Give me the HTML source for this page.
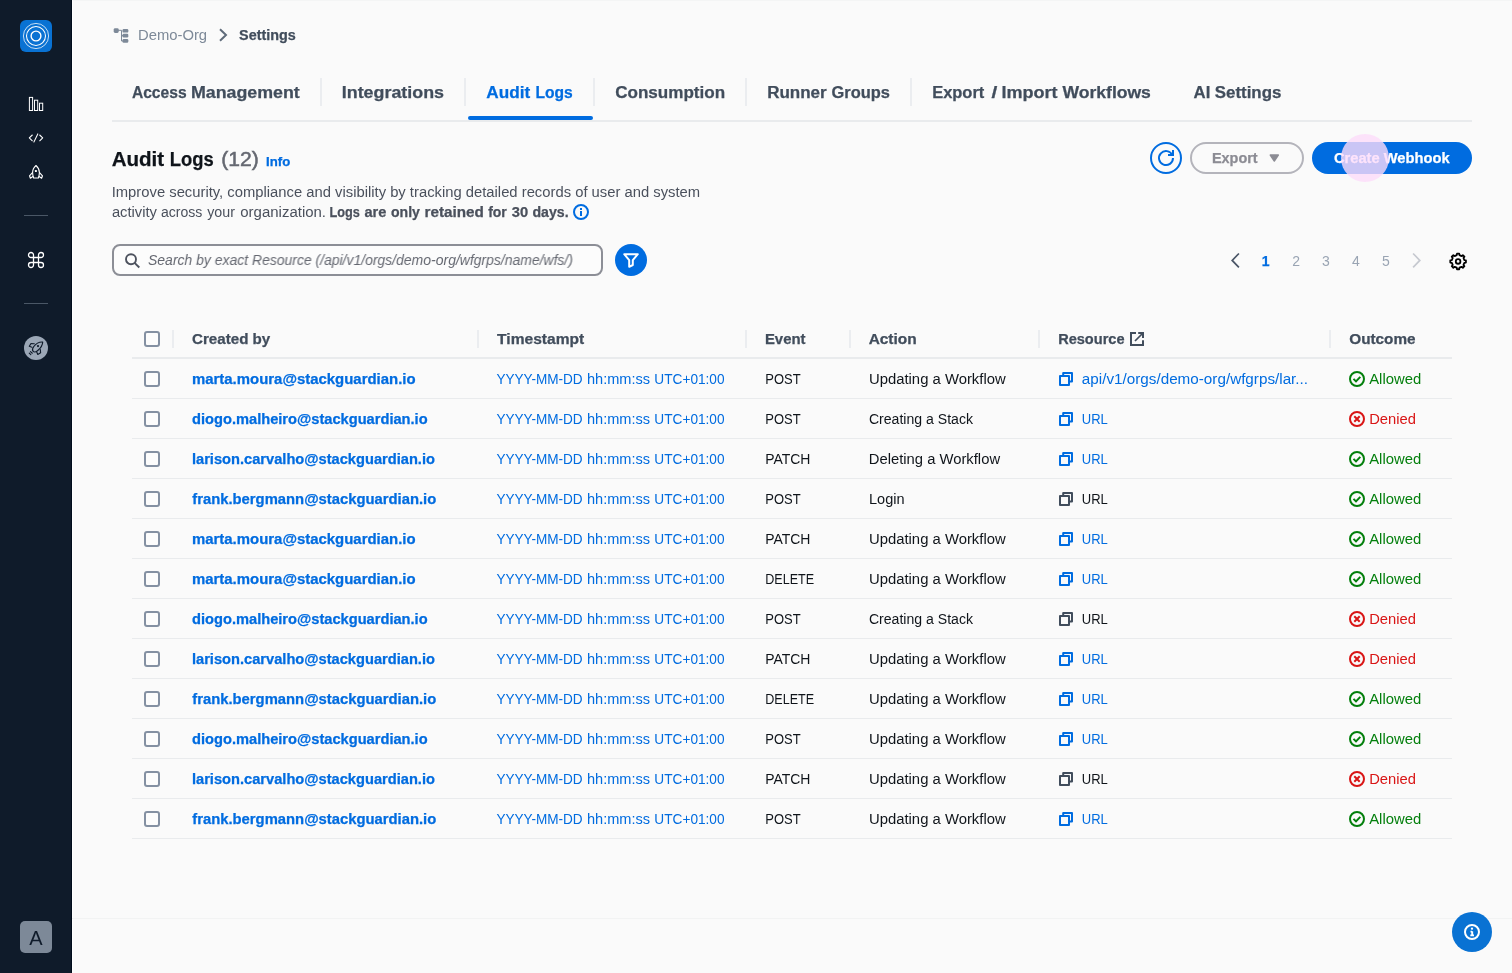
<!DOCTYPE html>
<html lang="en">
<head>
<meta charset="utf-8">
<title>Settings - Audit Logs</title>
<style>
*{box-sizing:border-box;margin:0;padding:0}
html,body{width:1512px;height:973px;overflow:hidden;background:#fafafa}
body{font-family:"Liberation Sans",sans-serif;font-size:14px;line-height:20px;color:#0f141a;position:relative}
.t{position:absolute;white-space:nowrap;display:block;transform-origin:0 50%}
.w{display:inline-block;white-space:pre;transform-origin:0 50%}
.a{position:absolute}
#app{position:absolute;left:0;top:0;width:1512px;height:973px;will-change:transform}
svg{display:block;position:absolute;overflow:visible}
#side{position:absolute;left:0;top:0;width:72px;height:973px;background:#0f1b2a;border-right:1px solid #010c1b}
#wl{position:absolute;left:72px;top:0;width:1px;height:973px;background:#fff}
#tl{position:absolute;left:73px;top:0;width:1439px;height:1px;background:#f4f5f5}
#logo{position:absolute;left:20px;top:20px;width:32px;height:32px;border-radius:6px;background:#0972d3}
.sdiv{position:absolute;left:24px;width:24px;height:1px;background:#4a5766}
#rk{position:absolute;left:24px;top:336px;width:24px;height:24px;border-radius:50%;background:#9ba7b6}
#ava{position:absolute;left:20px;top:921px;width:32px;height:32px;border-radius:5px;background:#7d8998}
#tabs{position:absolute;left:112px;top:64px;width:1360px;height:58px;border-bottom:2px solid #e9ebed}
.tsep{position:absolute;top:14px;width:2px;height:28px;background:#ebedf0}
#tline{position:absolute;left:356px;top:52px;width:125px;height:4px;border-radius:2px;background:#006ce0}
#tbl{position:absolute;left:132px;top:319px;width:1320px;height:520px}
.row{position:absolute;left:0;width:1320px;height:40px;border-bottom:1px solid #e9ebed}
.row.hd{border-bottom:2px solid #e9ebed}
.cb{position:absolute;left:12px;top:12px;width:16px;height:16px;border:2px solid #8490a2;border-radius:3px;background:#fcfcfc}
.hsep{position:absolute;top:11px;width:2px;height:18px;background:#ebedf0}
.ext{left:998px;top:13.2px}
.ic5{left:927px;top:13px}
.ic6{left:1217px;top:12px}
.lb{color:#006ce0}.lk{color:#0f141a}
.e1{left:59px;top:10px;transform:translateX(0.93px) scaleX(1.0665);font-weight:700;-webkit-text-stroke:0.25px;color:#006ce0}
.e2{left:60px;top:10px;transform:translateX(0.08px) scaleX(1.0457);font-weight:700;-webkit-text-stroke:0.25px;color:#006ce0}
.e3{left:59px;top:10px;transform:translateX(0.95px) scaleX(1.0461);font-weight:700;-webkit-text-stroke:0.25px;color:#006ce0}
.e4{left:60px;top:10px;transform:translateX(0.22px) scaleX(1.0578);font-weight:700;-webkit-text-stroke:0.25px;color:#006ce0}
.ts{left:363px;top:10px;color:#006ce0}
.ts1{width:93px;transform:translateX(1.41px) scaleX(0.9700)}
.ts2{width:65px;transform:translateX(-1.04px) scaleX(1.0411)}
.ts3{width:72px;transform:translateX(1.32px) scaleX(0.9759)}
.v1{left:633px;top:10px;transform:translateX(0.22px) scaleX(0.9273);color:#0f141a}
.v2{left:633px;top:10px;transform:translateX(0.14px) scaleX(0.9977);color:#0f141a}
.v3{left:633px;top:10px;transform:translateX(0.25px) scaleX(0.8981);color:#0f141a}
.a1{left:736px;top:10px;transform:translateX(0.94px) scaleX(1.0608);color:#0f141a}
.a2{left:736px;top:10px;transform:translateX(0.93px) scaleX(1.0055);color:#0f141a}
.a3{left:736px;top:10px;transform:translateX(0.77px) scaleX(1.0569);color:#0f141a}
.a4{left:736px;top:10px;transform:translateX(0.99px) scaleX(1.0383);color:#0f141a}
.r1{left:949px;top:10px;transform:translateX(0.87px) scaleX(1.0887)}
.r2{left:949px;top:10px;transform:translateX(0.77px) scaleX(0.9283)}
.o1{left:1237px;top:10px;transform:translateX(0.20px) scaleX(1.0609);color:#037f0c}
.o2{left:1237px;top:10px;transform:translateX(0.17px) scaleX(1.0535);color:#d91515}
</style>
</head>
<body>
<div id="app">
<div id="wl"></div><div id="tl"></div>
<div id="side">
  <div id="logo"><svg width="32" height="32" viewBox="0 0 32 32" fill="none" stroke="#fff"><circle cx="16" cy="16" r="12.6" stroke-width=".75"/><circle cx="16" cy="16" r="9.5" stroke-width="1.050"/><circle cx="16" cy="16" r="4.900" stroke-width="1.400"/></svg></div>
  <svg style="left:28px;top:96px" width="16" height="16" viewBox="0 0 16 16" fill="none" stroke="#fff" stroke-width="1"><rect x="1.4" y="1.4" width="3.2" height="13.1"/><rect x="6.500" y="4.2" width="3.200" height="10.3"/><rect x="11.500" y="7.2" width="3.200" height="7.3"/></svg>
  <svg style="left:28px;top:130px" width="16" height="16" viewBox="0 0 16 16" fill="none" stroke="#fff" stroke-width="1.050" stroke-linecap="round" stroke-linejoin="round"><path d="M4.300 5L1.300 7.900l3 2.900M11.700 5l3 2.900-3 2.900M9.800 3.900L5.900 12"/></svg>
  <svg style="left:28px;top:164px" width="16" height="16" viewBox="0 0 16 16" fill="none" stroke="#fff" stroke-width="1.1" stroke-linejoin="round"><path d="M8 1.5C5.6 3.6 4.6 6.2 4.6 8.6c0 2 .5 4 1 5.4h4.8c.5-1.4 1-3.400 1-5.400C11.400 6.200 10.400 3.600 8 1.500z"/><path d="M4.700 8.300L1.500 11.800 2.400 14.300 5.200 12.300M11.300 8.300l3.200 3.500-.9 2.500-2.800-2"/><rect x="6.900" y="6" width="2" height="2" rx=".5" fill="#fff" stroke="none"/></svg>
  <div class="sdiv" style="top:215px"></div>
  <svg style="left:27px;top:251px" width="18" height="18" viewBox="0 0 18 18" fill="none" stroke="#fff" stroke-width="1.3"><path d="M6.500 6.500h5v5h-5z"/><path d="M6.500 6.500H4A2.500 2.500 0 1 1 6.500 4zM11.500 6.500V4A2.500 2.500 0 1 1 14 6.500zM11.500 11.500H14A2.500 2.500 0 1 1 11.500 14zM6.500 11.500V14A2.500 2.500 0 1 1 4 11.500z"/></svg>
  <div class="sdiv" style="top:303px"></div>
  <div id="rk"><svg style="left:0;top:0" width="24" height="24" viewBox="0 0 24 24" fill="none" stroke="#0f1b2a" stroke-width="1.150" stroke-linejoin="round" stroke-linecap="round"><path d="M18.700 6C15.500 5.800 12 7.500 9.800 10.500 8.300 12.600 8 14 9 15.200c1 1.200 2.600 1 4.500-.5 3-2.300 5.100-5.200 5.200-8.700z"/><path d="M10.300 7.700L7 7.500 5.300 10.300l2.600.9M16.300 13.600l.3 3.100-2.800 1.700-1.100-2.400"/><circle cx="14" cy="10.100" r="1.100" fill="#0f1b2a" stroke="none"/><path d="M6.500 15.600l1.800 1.600M5.300 17.200l1.500 1.400"/></svg></div>
  <div id="ava"></div>
  <span class="t" style="left:29px;top:926px;transform:translateX(.33px);font-size:20px;line-height:24px;color:#0f1b2a">A</span>
</div>

<!-- breadcrumb icons -->
<svg style="left:113px;top:28px" width="16" height="16" viewBox="0 0 16 16" fill="#7d8998" stroke="none"><rect x=".7" y=".2" width="5" height="4.800" rx="1.400"/><rect x="9.500" y="1" width="5.800" height="3.600" rx="1.200"/><rect x="9.500" y="5.700" width="5.800" height="3.800" rx="1.200"/><rect x="9.500" y="11" width="5.800" height="3.800" rx="1.200"/><path d="M5 2.300h3.500v10.700h2" fill="none" stroke="#7d8998" stroke-width="1"/><path d="M8.500 7.600h2" fill="none" stroke="#7d8998" stroke-width="1"/></svg>
<svg style="left:215px;top:27px" width="16" height="16" viewBox="0 0 16 16" fill="none" stroke="#5f6b7a" stroke-width="2"><path d="M5 2.200L11 8l-6 5.800"/></svg>

<div id="tabs">
  <div class="tsep" style="left:208px"></div>
  <div class="tsep" style="left:352px"></div>
  <div class="tsep" style="left:480.700px"></div>
  <div class="tsep" style="left:633px"></div>
  <div class="tsep" style="left:798px"></div>
  <div id="tline"></div>
</div>

<!-- search -->
<div class="a" style="left:112px;top:244px;width:491px;height:32px;border:2px solid #8c8e96;border-radius:8px;background:#fcfcfc"></div>
<svg style="left:124px;top:252px" width="16" height="16" viewBox="0 0 16 16" fill="none" stroke="#4d525e" stroke-width="1.900"><circle cx="7" cy="7.200" r="5"/><path d="M15.300 15.500L10.600 10.800"/></svg>
<div class="a" style="left:615px;top:244px;width:32px;height:32px;border-radius:50%;background:#006ce0"></div>
<svg style="left:623px;top:252px" width="16" height="16" viewBox="0 0 16 16" fill="none" stroke="#fff" stroke-width="2" stroke-linejoin="round"><path d="M14.800 2.200H1.200l5 6v6.600l3.600-1.800V8.200l5-6Z"/></svg>
<!-- info icon -->
<svg style="left:573px;top:204px" width="16" height="16" viewBox="0 0 16 16" fill="none" stroke="#006ce0" stroke-width="2"><circle cx="8" cy="8" r="7"/><path d="M8 7v5"/><path d="M8 4v2"/></svg>

<!-- actions -->
<div class="a" style="left:1150px;top:142px;width:32px;height:32px;border-radius:50%;border:2px solid #006ce0"></div>
<svg style="left:1158px;top:150px" width="16" height="16" viewBox="0 0 16 16" fill="none" stroke="#006ce0" stroke-width="2"><path d="M10 5h5V0"/><path d="M15 8a7 7 0 1 1-.700-3"/></svg>
<div class="a" style="left:1190px;top:142px;width:114px;height:32px;border-radius:16px;border:2px solid #b4b4bb"></div>
<svg style="left:1268px;top:152px" width="12" height="12" viewBox="0 0 12 12" fill="#8c8c94" stroke="#8c8c94" stroke-width="1.500" stroke-linejoin="round"><path d="M2.300 3l8 0-4 6z"/></svg>
<div class="a" style="left:1312px;top:142px;width:160px;height:32px;border-radius:16px;background:#006ce0"></div>

<!-- pagination -->
<svg style="left:1227px;top:252px" width="16" height="16" viewBox="0 0 16 16" fill="none" stroke="#4a5567" stroke-width="1.700"><path d="M11.900 1.500L5.200 8.400l6.700 6.900"/></svg>
<svg style="left:1408px;top:252px" width="16" height="16" viewBox="0 0 16 16" fill="none" stroke="#c6c9d0" stroke-width="1.700"><path d="M5.100 1.500l6.700 6.900-6.700 6.900"/></svg>
<!--G1--><svg style="left:1450px;top:253px" width="16" height="16" viewBox="0 0 16 16" fill="none" stroke="#000" stroke-width="1.8" stroke-linejoin="round"><path d="M7.00 0.63L9.20 0.63L9.49 2.20L11.54 3.05L12.85 2.14L14.41 3.70L13.50 5.01L14.35 7.06L15.92 7.35L15.92 9.55L14.35 9.84L13.50 11.89L14.41 13.20L12.85 14.76L11.54 13.85L9.49 14.70L9.20 16.27L7.00 16.27L6.71 14.70L4.66 13.85L3.35 14.76L1.79 13.20L2.70 11.89L1.85 9.84L0.28 9.55L0.28 7.35L1.85 7.06L2.70 5.01L1.79 3.70L3.35 2.14L4.66 3.05L6.71 2.20Z"/><circle cx="8.1" cy="8.45" r="2.3"/></svg><!--G2-->

<span class="t" style="left:137px;top:25px;transform:translateX(0.97px) scaleX(1.0575);color:#7d8998">Demo-Org</span>
<span class="t" style="left:239px;top:25px;transform:translateX(0.09px) scaleX(1.0265);font-weight:700;-webkit-text-stroke:0.25px;color:#414d5c">Settings</span>
<span class="t" style="left:131px;top:83px;font-size:16px;font-weight:700;-webkit-text-stroke:0.25px;color:#414d5c"><span class="w" style="width:61px;transform:translateX(0.91px) scaleX(0.9757)">Access </span><span class="w" style="width:98px;transform:translateX(-1.11px) scaleX(1.1131)">Management</span></span>
<span class="t" style="left:341px;top:83px;transform:translateX(0.78px) scaleX(1.1165);font-size:16px;font-weight:700;-webkit-text-stroke:0.25px;color:#414d5c">Integrations</span>
<span class="t" style="left:485px;top:83px;font-size:16px;font-weight:700;-webkit-text-stroke:0.25px;color:#006ce0"><span class="w" style="width:46px;transform:translateX(1.26px) scaleX(1.0730)">Audit </span><span class="w" style="width:39px;transform:translateX(4.52px) scaleX(0.9753)">Logs</span></span>
<span class="t" style="left:615px;top:83px;transform:translateX(0.19px) scaleX(1.0660);font-size:16px;font-weight:700;-webkit-text-stroke:0.25px;color:#414d5c">Consumption</span>
<span class="t" style="left:767px;top:83px;font-size:16px;font-weight:700;-webkit-text-stroke:0.25px;color:#414d5c"><span class="w" style="width:61px;transform:translateX(0.14px) scaleX(1.0632)">Runner </span><span class="w" style="width:57px;transform:translateX(3.52px) scaleX(1.0252)">Groups</span></span>
<span class="t" style="left:932px;top:83px;font-size:16px;font-weight:700;-webkit-text-stroke:0.25px;color:#414d5c"><span class="w" style="width:56px;transform:translateX(0.17px) scaleX(1.0283)">Export </span><span class="w" style="width:9px;transform:translateX(3.58px) scaleX(1.3000)">/ </span><span class="w" style="width:55px;transform:translateX(4.47px) scaleX(1.1260)">Import </span><span class="w" style="width:81px;transform:translateX(10.50px) scaleX(1.0963)">Workflows</span></span>
<span class="t" style="left:1193px;top:83px;font-size:16px;font-weight:700;-webkit-text-stroke:0.25px;color:#414d5c"><span class="w" style="width:21px;transform:translateX(0.58px) scaleX(1.0465)">AI </span><span class="w" style="width:64px;transform:translateX(0.77px) scaleX(1.0548)">Settings</span></span>
<span class="t" style="left:111px;top:147px;font-size:20px;line-height:24px;font-weight:700;-webkit-text-stroke:0.25px;color:#0f141a"><span class="w" style="width:57px;transform:translateX(0.69px) scaleX(1.0272)">Audit </span><span class="w" style="width:48px;transform:translateX(1.77px) scaleX(0.9197)">Logs</span></span>
<span class="t" style="left:221px;top:147px;transform:translateX(0.27px) scaleX(1.0553);font-size:20px;line-height:24px;-webkit-text-stroke:0.5px;color:#656871">(12)</span>
<span class="t" style="left:266px;top:154px;transform:translateX(0.08px) scaleX(1.0984);font-size:12px;line-height:16px;font-weight:700;-webkit-text-stroke:0.25px;color:#006ce0">Info</span>
<span class="t" style="left:111px;top:182px;transform:translateX(0.69px) scaleX(1.0567);color:#4a505c">Improve security, compliance and visibility by tracking detailed records of user and system</span>
<span class="t" style="left:111px;top:202px;color:#4a505c"><span class="w" style="width:47px;transform:translateX(0.90px) scaleX(1.0524)">activity </span><span class="w" style="width:46px;transform:translateX(3.03px) scaleX(1.0025)">across </span><span class="w" style="width:32px;transform:translateX(3.23px) scaleX(1.0174)">your </span><span class="w" style="width:85px;transform:translateX(4.29px) scaleX(1.0695)">organization. </span></span>
<span class="t" style="left:329px;top:202px;font-weight:700;-webkit-text-stroke:0.25px;color:#4a505c"><span class="w" style="width:38px;transform:translateX(0.39px) scaleX(0.9079)">Logs </span><span class="w" style="width:25px;transform:translateX(-2.52px) scaleX(1.0400)">are </span><span class="w" style="width:33px;transform:translateX(-1.00px) scaleX(1.0047)">only </span><span class="w" style="width:59px;transform:translateX(-0.49px) scaleX(1.0876)">retained </span><span class="w" style="width:23px;transform:translateX(4.13px) scaleX(0.9982)">for </span><span class="w" style="width:20px;transform:translateX(4.85px) scaleX(1.0500)">30 </span><span class="w" style="width:36px;transform:translateX(5.50px) scaleX(1.0078)">days.</span></span>
<span class="t" style="left:148px;top:250px;transform:translateX(0.00px) scaleX(0.9965);font-style:italic;color:#656871">Search by exact Resource (/api/v1/orgs/demo-org/wfgrps/name/wfs/)</span>
<span class="t" style="left:1211px;top:148px;transform:translateX(0.97px) scaleX(1.0309);font-weight:700;-webkit-text-stroke:0.25px;color:#8c8c94">Export</span>
<span class="t" style="left:1333px;top:148px;transform:translateX(0.98px) scaleX(1.0486);font-weight:700;-webkit-text-stroke:0.25px;color:#fff">Create Webhook</span>
<span class="t" style="left:1261px;top:251px;transform:translateX(0.77px);font-weight:700;-webkit-text-stroke:0.25px;color:#006ce0">1</span>
<span class="t" style="left:1292px;top:251px;transform:translateX(0.27px);color:#99a4b3">2</span>
<span class="t" style="left:1322px;top:251px;transform:translateX(0.02px);color:#99a4b3">3</span>
<span class="t" style="left:1352px;top:251px;transform:translateX(0.12px);color:#99a4b3">4</span>
<span class="t" style="left:1382px;top:251px;transform:translateX(0.08px);color:#99a4b3">5</span>

<div class="a" style="left:1341px;top:134px;width:48px;height:48px;border-radius:50%;background:rgba(253,220,250,.8)"></div>

<div id="tbl">
<div class="row hd" style="top:0"><b class="cb"></b><i class="hsep" style="left:40px"></i><i class="hsep" style="left:345px"></i><i class="hsep" style="left:613px"></i><i class="hsep" style="left:717px"></i><i class="hsep" style="left:906px"></i><i class="hsep" style="left:1197px"></i><span class="t" style="left:60px;top:10px;transform:translateX(0.06px) scaleX(1.0800);font-weight:700;-webkit-text-stroke:0.25px;color:#414d5c">Created by</span><span class="t" style="left:365px;top:10px;transform:translateX(0.11px) scaleX(1.1115);font-weight:700;-webkit-text-stroke:0.25px;color:#414d5c">Timestampt</span><span class="t" style="left:632px;top:10px;transform:translateX(0.94px) scaleX(1.0622);font-weight:700;-webkit-text-stroke:0.25px;color:#414d5c">Event</span><span class="t" style="left:736px;top:10px;transform:translateX(0.63px) scaleX(1.1031);font-weight:700;-webkit-text-stroke:0.25px;color:#414d5c">Action</span><span class="t" style="left:926px;top:10px;transform:translateX(0.16px) scaleX(1.0396);font-weight:700;-webkit-text-stroke:0.25px;color:#414d5c">Resource</span><span class="t" style="left:1217px;top:10px;transform:translateX(0.25px) scaleX(1.0927);font-weight:700;-webkit-text-stroke:0.25px;color:#414d5c">Outcome</span><svg class="ext" width="14" height="14" viewBox="0 0 14 14" fill="none" stroke="#414d5c" stroke-width="2"><path d="M13 8.200V13H1V1h5"/><path d="M8.200 1H13v5"/><path d="M12.500 1.500L5 9" stroke-width="1.700"/></svg></div>
<div class="row" style="top:40px"><b class="cb"></b><span class="t e1">marta.moura@stackguardian.io</span><span class="t ts"><span class="w ts1">YYYY-MM-DD </span><span class="w ts2">hh:mm:ss </span><span class="w ts3">UTC+01:00</span></span><span class="t v1">POST</span><span class="t a1">Updating a Workflow</span><svg class="ic5" width="14" height="14" viewBox="0 0 14 14" fill="none" stroke="#006ce0" stroke-width="2" stroke-linejoin="round"><path d="M1 4h9v9H1z"/><path d="M4.200 3.500V1H13v8.600h-2.500"/></svg><span class="t r1 lb">api/v1/orgs/demo-org/wfgrps/lar...</span><svg class="ic6" width="16" height="16" viewBox="0 0 16 16" fill="none" stroke="#037f0c" stroke-width="2"><circle cx="8" cy="8" r="7"/><path d="M4.500 7.900l2.500 2.500 4.300-4.500"/></svg><span class="t o1">Allowed</span></div>
<div class="row" style="top:80px"><b class="cb"></b><span class="t e2">diogo.malheiro@stackguardian.io</span><span class="t ts"><span class="w ts1">YYYY-MM-DD </span><span class="w ts2">hh:mm:ss </span><span class="w ts3">UTC+01:00</span></span><span class="t v1">POST</span><span class="t a2">Creating a Stack</span><svg class="ic5" width="14" height="14" viewBox="0 0 14 14" fill="none" stroke="#006ce0" stroke-width="2" stroke-linejoin="round"><path d="M1 4h9v9H1z"/><path d="M4.200 3.500V1H13v8.600h-2.500"/></svg><span class="t r2 lb">URL</span><svg class="ic6" width="16" height="16" viewBox="0 0 16 16" fill="none" stroke="#d91515" stroke-width="2"><circle cx="8" cy="8" r="7"/><path d="M5.300 5.300l5.400 5.400M10.700 5.300l-5.400 5.400"/></svg><span class="t o2">Denied</span></div>
<div class="row" style="top:120px"><b class="cb"></b><span class="t e3">larison.carvalho@stackguardian.io</span><span class="t ts"><span class="w ts1">YYYY-MM-DD </span><span class="w ts2">hh:mm:ss </span><span class="w ts3">UTC+01:00</span></span><span class="t v2">PATCH</span><span class="t a3">Deleting a Workflow</span><svg class="ic5" width="14" height="14" viewBox="0 0 14 14" fill="none" stroke="#006ce0" stroke-width="2" stroke-linejoin="round"><path d="M1 4h9v9H1z"/><path d="M4.200 3.500V1H13v8.600h-2.500"/></svg><span class="t r2 lb">URL</span><svg class="ic6" width="16" height="16" viewBox="0 0 16 16" fill="none" stroke="#037f0c" stroke-width="2"><circle cx="8" cy="8" r="7"/><path d="M4.500 7.900l2.500 2.500 4.300-4.500"/></svg><span class="t o1">Allowed</span></div>
<div class="row" style="top:160px"><b class="cb"></b><span class="t e4">frank.bergmann@stackguardian.io</span><span class="t ts"><span class="w ts1">YYYY-MM-DD </span><span class="w ts2">hh:mm:ss </span><span class="w ts3">UTC+01:00</span></span><span class="t v1">POST</span><span class="t a4">Login</span><svg class="ic5" width="14" height="14" viewBox="0 0 14 14" fill="none" stroke="#414d5c" stroke-width="2" stroke-linejoin="round"><path d="M1 4h9v9H1z"/><path d="M4.200 3.500V1H13v8.600h-2.500"/></svg><span class="t r2 lk">URL</span><svg class="ic6" width="16" height="16" viewBox="0 0 16 16" fill="none" stroke="#037f0c" stroke-width="2"><circle cx="8" cy="8" r="7"/><path d="M4.500 7.900l2.500 2.500 4.300-4.500"/></svg><span class="t o1">Allowed</span></div>
<div class="row" style="top:200px"><b class="cb"></b><span class="t e1">marta.moura@stackguardian.io</span><span class="t ts"><span class="w ts1">YYYY-MM-DD </span><span class="w ts2">hh:mm:ss </span><span class="w ts3">UTC+01:00</span></span><span class="t v2">PATCH</span><span class="t a1">Updating a Workflow</span><svg class="ic5" width="14" height="14" viewBox="0 0 14 14" fill="none" stroke="#006ce0" stroke-width="2" stroke-linejoin="round"><path d="M1 4h9v9H1z"/><path d="M4.200 3.500V1H13v8.600h-2.500"/></svg><span class="t r2 lb">URL</span><svg class="ic6" width="16" height="16" viewBox="0 0 16 16" fill="none" stroke="#037f0c" stroke-width="2"><circle cx="8" cy="8" r="7"/><path d="M4.500 7.900l2.500 2.500 4.300-4.500"/></svg><span class="t o1">Allowed</span></div>
<div class="row" style="top:240px"><b class="cb"></b><span class="t e1">marta.moura@stackguardian.io</span><span class="t ts"><span class="w ts1">YYYY-MM-DD </span><span class="w ts2">hh:mm:ss </span><span class="w ts3">UTC+01:00</span></span><span class="t v3">DELETE</span><span class="t a1">Updating a Workflow</span><svg class="ic5" width="14" height="14" viewBox="0 0 14 14" fill="none" stroke="#006ce0" stroke-width="2" stroke-linejoin="round"><path d="M1 4h9v9H1z"/><path d="M4.200 3.500V1H13v8.600h-2.500"/></svg><span class="t r2 lb">URL</span><svg class="ic6" width="16" height="16" viewBox="0 0 16 16" fill="none" stroke="#037f0c" stroke-width="2"><circle cx="8" cy="8" r="7"/><path d="M4.500 7.900l2.500 2.500 4.300-4.500"/></svg><span class="t o1">Allowed</span></div>
<div class="row" style="top:280px"><b class="cb"></b><span class="t e2">diogo.malheiro@stackguardian.io</span><span class="t ts"><span class="w ts1">YYYY-MM-DD </span><span class="w ts2">hh:mm:ss </span><span class="w ts3">UTC+01:00</span></span><span class="t v1">POST</span><span class="t a2">Creating a Stack</span><svg class="ic5" width="14" height="14" viewBox="0 0 14 14" fill="none" stroke="#414d5c" stroke-width="2" stroke-linejoin="round"><path d="M1 4h9v9H1z"/><path d="M4.200 3.500V1H13v8.600h-2.500"/></svg><span class="t r2 lk">URL</span><svg class="ic6" width="16" height="16" viewBox="0 0 16 16" fill="none" stroke="#d91515" stroke-width="2"><circle cx="8" cy="8" r="7"/><path d="M5.300 5.300l5.400 5.400M10.700 5.300l-5.400 5.400"/></svg><span class="t o2">Denied</span></div>
<div class="row" style="top:320px"><b class="cb"></b><span class="t e3">larison.carvalho@stackguardian.io</span><span class="t ts"><span class="w ts1">YYYY-MM-DD </span><span class="w ts2">hh:mm:ss </span><span class="w ts3">UTC+01:00</span></span><span class="t v2">PATCH</span><span class="t a1">Updating a Workflow</span><svg class="ic5" width="14" height="14" viewBox="0 0 14 14" fill="none" stroke="#006ce0" stroke-width="2" stroke-linejoin="round"><path d="M1 4h9v9H1z"/><path d="M4.200 3.500V1H13v8.600h-2.500"/></svg><span class="t r2 lb">URL</span><svg class="ic6" width="16" height="16" viewBox="0 0 16 16" fill="none" stroke="#d91515" stroke-width="2"><circle cx="8" cy="8" r="7"/><path d="M5.300 5.300l5.400 5.400M10.700 5.300l-5.400 5.400"/></svg><span class="t o2">Denied</span></div>
<div class="row" style="top:360px"><b class="cb"></b><span class="t e4">frank.bergmann@stackguardian.io</span><span class="t ts"><span class="w ts1">YYYY-MM-DD </span><span class="w ts2">hh:mm:ss </span><span class="w ts3">UTC+01:00</span></span><span class="t v3">DELETE</span><span class="t a1">Updating a Workflow</span><svg class="ic5" width="14" height="14" viewBox="0 0 14 14" fill="none" stroke="#006ce0" stroke-width="2" stroke-linejoin="round"><path d="M1 4h9v9H1z"/><path d="M4.200 3.500V1H13v8.600h-2.500"/></svg><span class="t r2 lb">URL</span><svg class="ic6" width="16" height="16" viewBox="0 0 16 16" fill="none" stroke="#037f0c" stroke-width="2"><circle cx="8" cy="8" r="7"/><path d="M4.500 7.900l2.500 2.500 4.300-4.500"/></svg><span class="t o1">Allowed</span></div>
<div class="row" style="top:400px"><b class="cb"></b><span class="t e2">diogo.malheiro@stackguardian.io</span><span class="t ts"><span class="w ts1">YYYY-MM-DD </span><span class="w ts2">hh:mm:ss </span><span class="w ts3">UTC+01:00</span></span><span class="t v1">POST</span><span class="t a1">Updating a Workflow</span><svg class="ic5" width="14" height="14" viewBox="0 0 14 14" fill="none" stroke="#006ce0" stroke-width="2" stroke-linejoin="round"><path d="M1 4h9v9H1z"/><path d="M4.200 3.500V1H13v8.600h-2.500"/></svg><span class="t r2 lb">URL</span><svg class="ic6" width="16" height="16" viewBox="0 0 16 16" fill="none" stroke="#037f0c" stroke-width="2"><circle cx="8" cy="8" r="7"/><path d="M4.500 7.900l2.500 2.500 4.300-4.500"/></svg><span class="t o1">Allowed</span></div>
<div class="row" style="top:440px"><b class="cb"></b><span class="t e3">larison.carvalho@stackguardian.io</span><span class="t ts"><span class="w ts1">YYYY-MM-DD </span><span class="w ts2">hh:mm:ss </span><span class="w ts3">UTC+01:00</span></span><span class="t v2">PATCH</span><span class="t a1">Updating a Workflow</span><svg class="ic5" width="14" height="14" viewBox="0 0 14 14" fill="none" stroke="#414d5c" stroke-width="2" stroke-linejoin="round"><path d="M1 4h9v9H1z"/><path d="M4.200 3.500V1H13v8.600h-2.500"/></svg><span class="t r2 lk">URL</span><svg class="ic6" width="16" height="16" viewBox="0 0 16 16" fill="none" stroke="#d91515" stroke-width="2"><circle cx="8" cy="8" r="7"/><path d="M5.300 5.300l5.400 5.400M10.700 5.300l-5.400 5.400"/></svg><span class="t o2">Denied</span></div>
<div class="row" style="top:480px"><b class="cb"></b><span class="t e4">frank.bergmann@stackguardian.io</span><span class="t ts"><span class="w ts1">YYYY-MM-DD </span><span class="w ts2">hh:mm:ss </span><span class="w ts3">UTC+01:00</span></span><span class="t v1">POST</span><span class="t a1">Updating a Workflow</span><svg class="ic5" width="14" height="14" viewBox="0 0 14 14" fill="none" stroke="#006ce0" stroke-width="2" stroke-linejoin="round"><path d="M1 4h9v9H1z"/><path d="M4.200 3.500V1H13v8.600h-2.500"/></svg><span class="t r2 lb">URL</span><svg class="ic6" width="16" height="16" viewBox="0 0 16 16" fill="none" stroke="#037f0c" stroke-width="2"><circle cx="8" cy="8" r="7"/><path d="M4.500 7.900l2.500 2.500 4.300-4.500"/></svg><span class="t o1">Allowed</span></div>
</div>

<div class="a" style="left:72px;top:918px;width:1440px;height:1px;background:#f2f3f3"></div>
<div class="a" style="left:1452px;top:912px;width:40px;height:40px;border-radius:50%;background:#0972d3"></div>
<svg style="left:1464px;top:924px" width="16" height="16" viewBox="0 0 16 16" fill="none" stroke="#fff" stroke-width="2"><circle cx="8" cy="8" r="7"/><path d="M8.200 7.200v4.300M6.300 11.400h3.700M6.500 7.600H8" stroke-width="1.900"/><circle cx="8" cy="4.700" r="1.150" fill="#fff" stroke="none"/></svg>
</div>
</body>
</html>
